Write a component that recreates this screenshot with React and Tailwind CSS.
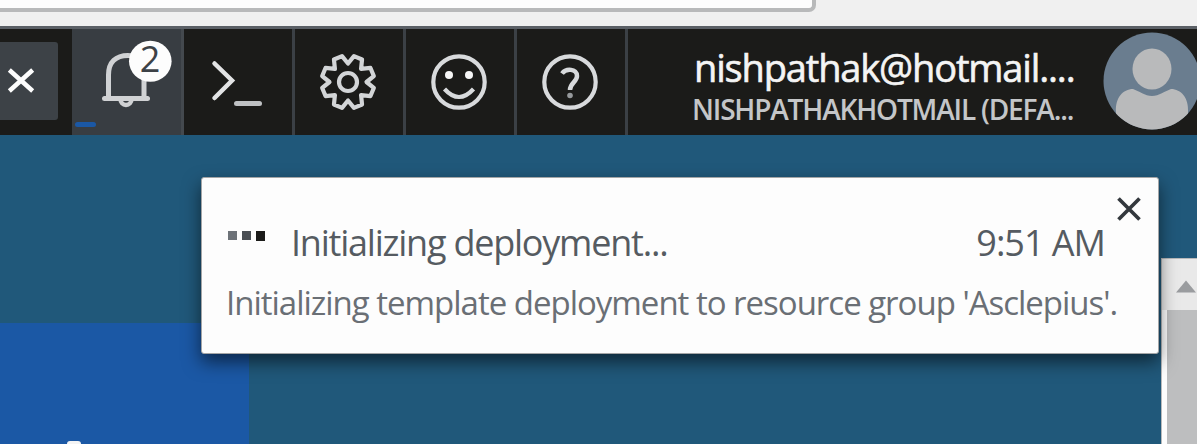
import React from "react";

const polar = (deg, r) => {
  const a = (deg * Math.PI) / 180;
  return `${(30 + r * Math.sin(a)).toFixed(2)} ${(30 - r * Math.cos(a)).toFixed(2)}`;
};

const gearPath =
  "M" +
  Array.from({ length: 8 }, (_, k) => [
    polar(45 * k, 18.5),
    polar(45 * k + 13, 26.5),
    polar(45 * k + 32, 26.5),
  ])
    .flat()
    .join("L") +
  "Z";

function Cell({ children }) {
  return (
    <div className="flex h-full w-[111px] shrink-0 items-center justify-center border-r-[3px] border-[#3b4045] pb-px pr-0.5">
      {children}
    </div>
  );
}

function BellIcon() {
  return (
    <svg width="84" height="72" viewBox="0 0 84 72" fill="none">
      <g stroke="#d0d2d4" strokeWidth="5">
        <path d="M16.500 60V37C16.500 24 24 17.500 36 17.500S52 27 52 37V60" />
        <path d="M12.500 60.500H55.500" strokeLinecap="round" strokeWidth="5" />
        <path d="M28.500 61a5.500 6 0 0 0 11 0" strokeWidth="4.500" />
      </g>
      <ellipse cx="58.300" cy="23.200" rx="21.300" ry="20.500" fill="#fdfdfd" />
    </svg>
  );
}

function TopBar() {
  return (
    <header className="flex h-[109px] shrink-0 items-stretch border-t-[3px] border-[#5b6066] bg-[#1b1b19]">
      <div className="flex w-[72px] shrink-0 items-center pb-[3px]">
        <button className="flex h-[78px] w-[58px] items-center rounded-r-[3px] bg-[#3d4247] pl-1.5">
          <svg width="30" height="28" viewBox="0 0 30 28" stroke="#fdfdfd" strokeWidth="4.500" strokeLinecap="square">
            <path d="M5 4.500L25 22.500M25 4.500L5 22.500" />
          </svg>
        </button>
      </div>
      <div className="relative w-[112px] shrink-0 border-r-[3px] border-[#44494e] bg-[#383d42]">
        <div className="pl-[20px] pt-[9px]">
          <BellIcon />
        </div>
        <span className="absolute left-[57px] top-[9px] w-[42px] text-center font-['Open_Sans',sans-serif] text-[36px] leading-[42px] text-[#3d4247]">
          2
        </span>
        <span className="absolute bottom-[8px] left-[3px] h-[5px] w-[21px] rounded-sm bg-[#1b58a5]" />
      </div>
      <Cell>
        <svg width="60" height="60" viewBox="0 0 60 60" fill="none" stroke="#e3e4e5" strokeLinecap="round">
          <path d="M7.500 11.500L25 28.500L7.500 46" strokeWidth="4.500" />
          <path d="M29.500 51.500H52.500" strokeWidth="5" stroke="#bfc1c3" />
        </svg>
      </Cell>
      <Cell>
        <svg width="60" height="60" viewBox="0 0 60 60" fill="none" stroke="#d3d5d7" strokeWidth="4.200" strokeLinejoin="round">
          <path d={gearPath} />
          <circle cx="30" cy="30" r="9" />
        </svg>
      </Cell>
      <Cell>
        <svg width="60" height="60" viewBox="0 0 60 60" fill="none" stroke="#d8dadc" strokeWidth="4.200">
          <circle cx="30" cy="30" r="25.700" />
          <circle cx="20" cy="23" r="4" fill="#f5f5f5" stroke="none" />
          <circle cx="40" cy="23" r="4" fill="#f5f5f5" stroke="none" />
          <path d="M15.500 37Q30 53 44.500 37" />
        </svg>
      </Cell>
      <Cell>
        <svg width="60" height="60" viewBox="0 0 60 60" fill="none" stroke="#d8dadc" strokeWidth="4.200">
          <circle cx="30" cy="30" r="25.700" />
          <path d="M22 21.500C26 16 37 16.500 37 24C37 30 30 31 30 38" strokeWidth="4.500" />
          <circle cx="30" cy="43.500" r="2.800" fill="#96999c" stroke="none" />
        </svg>
      </Cell>
      <div className="flex min-w-0 flex-1 items-start overflow-hidden">
        <div className="w-[475px] shrink-0 whitespace-nowrap pl-[64px] pt-[17px] font-['Open_Sans',sans-serif]">
          <div className="pl-0.5 text-[38px] leading-[42px] tracking-[-1.15px] text-[#f4f4f4] [-webkit-text-stroke:0.6px_#f4f4f4]">
            nishpathak@hotmail....
          </div>
          <div className="mt-[3px] text-[28px] leading-[36px] tracking-[-1.17px] font-semibold text-[#c4c6c8]">
            NISHPATHAKHOTMAIL (DEFA...
          </div>
        </div>
        <svg className="mt-[3px] shrink-0" width="98" height="98" viewBox="0 0 98 98">
          <defs>
            <clipPath id="avatar">
              <circle cx="49" cy="49" r="48.500" />
            </clipPath>
          </defs>
          <circle cx="49" cy="49" r="48.500" fill="#6a7d8f" />
          <g clipPath="url(#avatar)">
            <ellipse cx="49" cy="37" rx="19.500" ry="20.500" fill="#b9babb" />
            <path d="M13 80C12 66 20 57 30 57C36 59 42 64 49 64S62 59 68 57C78 57 86 66 85 80V98H13Z" fill="#b9babb" />
          </g>
        </svg>
      </div>
    </header>
  );
}

function Toast() {
  return (
    <section className="absolute left-[201px] top-[177px] h-[177px] w-[958px] rounded-[3px] border border-[#a4a5a6] bg-[#fdfdfd] font-['Open_Sans',sans-serif] text-[#555b61] shadow-[0_8px_18px_rgba(0,0,0,0.55)]">
      <div className="flex h-[90px] items-end whitespace-nowrap pl-[26px] pr-[53px]">
        <div className="mb-[27px] flex gap-[5px]">
          <span className="h-[9px] w-[9px] bg-[#6d7278]" />
          <span className="h-[9px] w-[9px] bg-[#4a4f54]" />
          <span className="h-[10px] w-[9px] bg-[#1b1b19]" />
        </div>
        <div className="ml-[26px] text-[36px] leading-[50px] tracking-[-1.22px]">Initializing deployment...</div>
        <div className="ml-auto text-[36px] leading-[50px] tracking-[-1px]">9:51 AM</div>
      </div>
      <p className="mt-[11px] whitespace-nowrap pl-[24px] text-[33px] leading-[48px] tracking-[-1.01px] text-[#6a6f75]">
        Initializing template deployment to resource group 'Asclepius'.
      </p>
      <button className="absolute right-[15px] top-[17px]">
        <svg width="28" height="28" viewBox="0 0 28 28" stroke="#33383d" strokeWidth="3.700">
          <path d="M3.500 3.500L24.500 24.500M24.500 3.500L3.500 24.500" />
        </svg>
      </button>
    </section>
  );
}

export default function App() {
  return (
    <div className="relative flex h-[444px] w-[1200px] overflow-hidden bg-[#fdfdfd]">
      <div className="flex w-[1197px] flex-col">
        <div className="h-[26px] shrink-0 bg-[#f0f0f0]">
          <div className="h-[12px] w-[816px] rounded-br-[7px] border-b-4 border-r-4 border-[#b8b9ba] bg-[#fdfdfd]" />
        </div>
        <TopBar />
        <main className="flex min-h-0 flex-1 items-end bg-[#20587a]">
          <div className="flex h-[121px] w-[249px] items-end bg-[#1b58a5] pl-[67px]">
            <span className="h-[3px] w-[14px] rounded-t-sm bg-[#f4f4f4]" />
          </div>
          <div className="ml-auto flex h-[186px] w-[36px] flex-col border-l border-t border-[#b8b9ba] bg-[#fdfdfd]">
            <div className="flex h-[51px] items-center justify-center bg-[#e9e9e9] pl-[13px] pt-[3px]">
              <svg width="22" height="13" viewBox="0 0 22 13">
                <path d="M1 12.500L11 0.500L21 12.500Z" fill="#9a9c9f" />
              </svg>
            </div>
            <div className="ml-[5px] flex-1 bg-[#bdbebf]" />
          </div>
        </main>
      </div>
      <Toast />
    </div>
  );
}
